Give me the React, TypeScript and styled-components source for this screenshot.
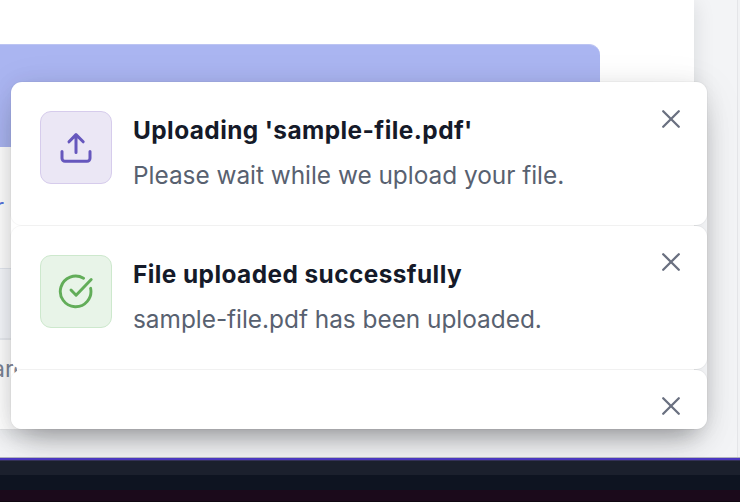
import React from "react";
import styled, { createGlobalStyle } from "styled-components";

const GlobalStyle = createGlobalStyle`
  * { box-sizing: border-box; }
  html, body { margin: 0; overflow: hidden; }
  body { font-family: Inter, sans-serif; background: #1b0a1a; }
`;

const Screen = styled.div`
  position: relative;
  width: 740px;
  height: 502px;
  overflow: hidden;
  display: flex;
  flex-direction: column;
`;

const Workspace = styled.div`
  position: relative;
  height: 457px;
  flex: none;
  overflow: hidden;
  background: #f3f4f6;
  border-right: 2px solid #f1f2f4;
  box-shadow: inset -1px 0 #e4e5e8;
`;

const Sheet = styled.main`
  width: 694px;
  height: 430px;
  padding-top: 44px;
  background: #fff;
  border-bottom: 1px solid #e0e1e3;
  box-shadow: 0 4px 20px rgba(20, 24, 35, 0.12);
`;

const Banner = styled.div`
  width: 600px;
  height: 103px;
  border-radius: 0 11px 0 0;
  background: #aab5f1;
  border-top: 1px solid #bcc4f2;
`;

const LinkRow = styled.div`
  height: 121px;
  padding-top: 44px;
  color: #5b75dd;
  font-size: 24px;
  line-height: 32px;
  text-indent: -5px;
`;

const HeaderRow = styled.div`
  height: 72px;
  background: #f6f8fc;
  border-top: 1px solid #e4e8f0;
  border-bottom: 2px solid #e9ecf1;
`;

const DataRow = styled.div`
  width: 17px;
  overflow: hidden;
  padding-top: 14px;
  color: #7b8495;
  font-size: 23px;
  line-height: 30px;
  text-indent: -8px;
`;

const ToastStack = styled.section`
  position: absolute;
  left: 10.5px;
  top: 82px;
  width: 696.5px;
  height: 347px;
  display: flex;
  flex-direction: column;
  gap: 1px;
  border-radius: 10px;
  box-shadow: 0 0 22px rgba(20, 24, 35, 0.06),
    0 8px 44px rgba(20, 20, 24, 0.08),
    0 18px 30px -12px rgba(20, 20, 24, 0.3);
`;

const ToastCard = styled.article<{ $compact?: boolean }>`
  flex: none;
  display: flex;
  align-items: flex-start;
  height: ${(p) => (p.$compact ? "59px" : "143px")};
  padding: ${(p) => (p.$compact ? "24px 24px 0 29.5px" : "29px 24px 0 29.5px")};
  background: #fff;
  border-radius: 11px;
  box-shadow: 0 0 0 1px rgba(20, 24, 35, 0.03);
`;

const IconTile = styled.div<{ $tone: "violet" | "green" }>`
  width: 72px;
  height: 73px;
  flex: none;
  display: grid;
  place-items: center;
  border-radius: 11px;
  color: ${(p) => (p.$tone === "violet" ? "#6657bd" : "#62ad59")};
  background: ${(p) => (p.$tone === "violet" ? "#ebe7f5" : "#e8f4e8")};
  border: 1px solid ${(p) => (p.$tone === "violet" ? "#d6ccec" : "#cde8cd")};
`;

const Copy = styled.div`
  flex: 1;
  padding-left: 21px;
  white-space: nowrap;
`;

const Title = styled.h2`
  margin: 0;
  color: #151a29;
  font-size: 24.4px;
  line-height: 39px;
  font-weight: 700;
  letter-spacing: 0.43px;
`;

const Message = styled.p`
  margin: 6px 0 0;
  color: #586170;
  font-size: 24.4px;
  line-height: 39px;
  letter-spacing: -0.02px;
`;

const CloseButton = styled.button<{ $compact?: boolean; $raised?: boolean }>`
  width: 24px;
  height: 24px;
  margin-top: ${(p) => (p.$compact ? "0" : p.$raised ? "-5px" : "-4px")};
  margin-left: auto;
  padding: 0;
  border: 0;
  background: none;
  color: #6a7080;
`;

const StatusEdge = styled.div`
  height: 4px;
  flex: none;
  background: #4a37c0;
  border-top: 1px solid #b2b4bd;
  border-bottom: 1px solid #343157;
`;

const Dock = styled.div`
  height: 29px;
  flex: none;
  border-top: 14px solid #1b202d;
  background: #0e1421;
`;

const Desktop = styled.div`
  flex: 1;
  background: #1b0a1b;
  border-bottom: 1px solid #100711;
`;

const CloseIcon = () => (
  <svg width="24" height="24" viewBox="0 0 24 24" fill="none" stroke="currentColor" strokeWidth="2.3" strokeLinecap="round" display="block">
    <path d="M4.2 4.2l15.6 15.6M19.8 4.2L4.2 19.8" />
  </svg>
);

const UploadIcon = () => (
  <svg width="36" height="36" viewBox="0 0 36 36" fill="none" stroke="currentColor" strokeWidth="3" strokeLinecap="round" strokeLinejoin="round">
    <path d="M4 21.5v6.7a3 3 0 0 0 3 3h22a3 3 0 0 0 3-3v-6.7M18 22.5V5M11 11.8 18 4.6l7.2 7.2" />
  </svg>
);

const CheckIcon = () => (
  <svg width="36" height="36" viewBox="0 0 36 36" fill="none" stroke="currentColor" strokeWidth="2.9" strokeLinecap="round" strokeLinejoin="round">
    <path d="M25.5 4.3A15.3 15.3 0 1 0 32.6 14.3" />
    <path d="M13 16l5.1 5.2L33.2 5.5" />
  </svg>
);

function Toast({ tone, title, message }: { tone: "violet" | "green"; title: string; message: string }) {
  return (
    <ToastCard>
      <IconTile $tone={tone}>{tone === "violet" ? <UploadIcon /> : <CheckIcon />}</IconTile>
      <Copy>
        <Title>{title}</Title>
        <Message>{message}</Message>
      </Copy>
      <CloseButton $raised={tone === "green"} aria-label="Close"><CloseIcon /></CloseButton>
    </ToastCard>
  );
}

export default function App() {
  return (
    <Screen>
      <GlobalStyle />
      <Workspace>
        <Sheet>
          <Banner />
          <LinkRow>r</LinkRow>
          <HeaderRow />
          <DataRow>are</DataRow>
        </Sheet>
        <ToastStack>
          <Toast tone="violet" title="Uploading 'sample-file.pdf'" message="Please wait while we upload your file." />
          <Toast tone="green" title="File uploaded successfully" message="sample-file.pdf has been uploaded." />
          <ToastCard $compact>
            <CloseButton $compact aria-label="Close"><CloseIcon /></CloseButton>
          </ToastCard>
        </ToastStack>
      </Workspace>
      <StatusEdge />
      <Dock />
      <Desktop />
    </Screen>
  );
}
